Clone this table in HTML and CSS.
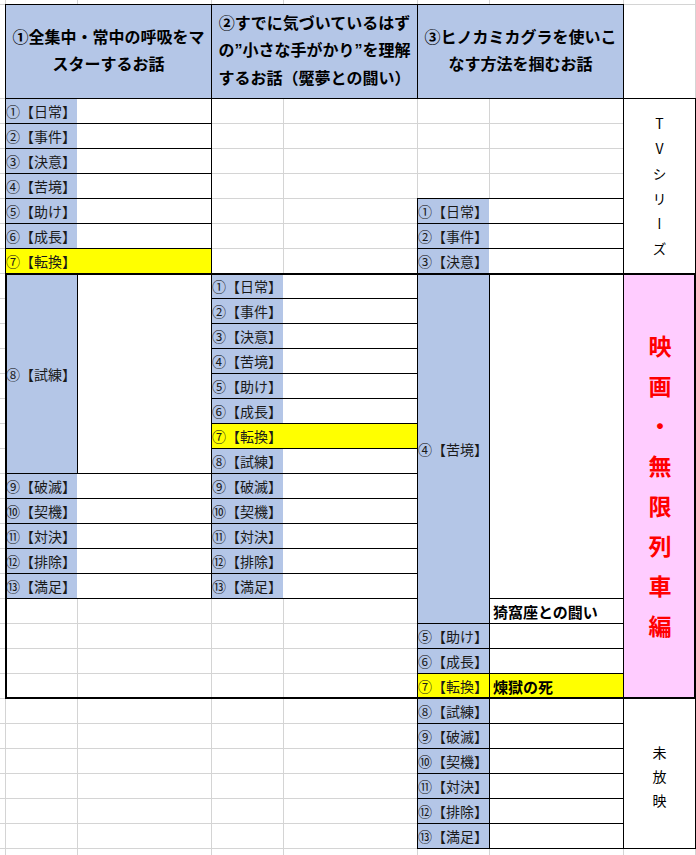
FILE: index.html
```html
<!DOCTYPE html>
<html lang="ja">
<head>
<meta charset="utf-8">
<title>鬼滅の刃 構成表</title>
<link rel="stylesheet" href="styles.css">
</head>
<body>
<div class="sheet">
  <!-- headers -->
  <div class="cell head ca hr"><p class="ht">①全集中・常中の呼吸をマ<br>スターするお話</p></div>
  <div class="cell head cb hr"><p class="ht">②すでに気づいているはず<br>の<span class="q">”</span>小さな手がかり<span class="q">”</span>を理解<br>するお話（魘夢との闘い）</p></div>
  <div class="cell head cc hr"><p class="ht">③ヒノカミカグラを使いこ<br>なす方法を掴むお話</p></div>

  <!-- column 1 -->
  <div class="cell ca r1"><span class="lb">①【日常】</span></div>
  <div class="cell ca r2"><span class="lb">②【事件】</span></div>
  <div class="cell ca r3"><span class="lb">③【決意】</span></div>
  <div class="cell ca r4"><span class="lb">④【苦境】</span></div>
  <div class="cell ca r5"><span class="lb">⑤【助け】</span></div>
  <div class="cell ca r6"><span class="lb">⑥【成長】</span></div>
  <div class="cell ca r7 yel"><span class="lb">⑦【転換】</span></div>
  <div class="cell cal r8 s8 blue lbx">⑧【試練】</div>
  <div class="cell cat r8 s8"></div>
  <div class="cell ca r16"><span class="lb">⑨【破滅】</span></div>
  <div class="cell ca r17"><span class="lb">⑩【契機】</span></div>
  <div class="cell ca r18"><span class="lb">⑪【対決】</span></div>
  <div class="cell ca r19"><span class="lb">⑫【排除】</span></div>
  <div class="cell ca r20"><span class="lb">⑬【満足】</span></div>

  <!-- column 2 -->
  <div class="cell cb r8"><span class="lb">①【日常】</span></div>
  <div class="cell cb r9"><span class="lb">②【事件】</span></div>
  <div class="cell cb r10"><span class="lb">③【決意】</span></div>
  <div class="cell cb r11"><span class="lb">④【苦境】</span></div>
  <div class="cell cb r12"><span class="lb">⑤【助け】</span></div>
  <div class="cell cb r13"><span class="lb">⑥【成長】</span></div>
  <div class="cell cb r14 yel"><span class="lb">⑦【転換】</span></div>
  <div class="cell cb r15"><span class="lb">⑧【試練】</span></div>
  <div class="cell cb r16"><span class="lb">⑨【破滅】</span></div>
  <div class="cell cb r17"><span class="lb">⑩【契機】</span></div>
  <div class="cell cb r18"><span class="lb">⑪【対決】</span></div>
  <div class="cell cb r19"><span class="lb">⑫【排除】</span></div>
  <div class="cell cb r20"><span class="lb">⑬【満足】</span></div>

  <!-- column 3 -->
  <div class="cell cc r5"><span class="lb">①【日常】</span></div>
  <div class="cell cc r6"><span class="lb">②【事件】</span></div>
  <div class="cell cc r7"><span class="lb">③【決意】</span></div>
  <div class="cell ccl r8 s14 blue lbx">④【苦境】</div>
  <div class="cell cct r8 s13"></div>
  <div class="cell cct r21"><span class="bt">猗窩座との闘い</span></div>
  <div class="cell ccl r22 blue lbx">⑤【助け】</div>
  <div class="cell cct r22"></div>
  <div class="cell ccl r23 blue lbx">⑥【成長】</div>
  <div class="cell cct r23"></div>
  <div class="cell ccl r24 yel lbx">⑦【転換】</div>
  <div class="cell cct r24 yel"><span class="bt">煉獄の死</span></div>
  <div class="cell ccl r25 blue lbx">⑧【試練】</div>
  <div class="cell cct r25"></div>
  <div class="cell ccl r26 blue lbx">⑨【破滅】</div>
  <div class="cell cct r26"></div>
  <div class="cell ccl r27 blue lbx">⑩【契機】</div>
  <div class="cell cct r27"></div>
  <div class="cell ccl r28 blue lbx">⑪【対決】</div>
  <div class="cell cct r28"></div>
  <div class="cell ccl r29 blue lbx">⑫【排除】</div>
  <div class="cell cct r29"></div>
  <div class="cell ccl r30 blue lbx">⑬【満足】</div>
  <div class="cell cct r30"></div>

  <!-- column 4 -->
  <div class="cell cd r1 s7 mid"><span class="vt tv">TVシリーズ</span></div>
  <div class="cell cd r8 s17 mid pink"><span class="vt movie">映画・無限列車編</span></div>
  <div class="cell cd r25 s6 mid"><span class="vt unaired">未放映</span></div>

  <!-- thick frame around the film block -->
  <div class="frame r8 s17"></div>
</div>
</body>
</html>
```

FILE: styles.css
```css
* { box-sizing: border-box; }

html, body {
  margin: 0;
  padding: 0;
  background: #fff;
}

body {
  font-family: "Noto Sans CJK JP", "Noto Sans", sans-serif;
  color: #000;
}

.sheet {
  display: grid;
  grid-template-columns: 5px 72px 134px 72px 134px 72px 134px 72px 1px;
  grid-template-rows: 4px 94px repeat(30, 25px) 7px;
  width: 696px;
  height: 855px;
  overflow: hidden;
  background:
    linear-gradient(to right,
      transparent 5px, #d4d4d4 5px 6px,
      transparent 6px 77px, #d4d4d4 77px 78px,
      transparent 78px 211px, #d4d4d4 211px 212px,
      transparent 212px 283px, #d4d4d4 283px 284px,
      transparent 284px 417px, #d4d4d4 417px 418px,
      transparent 418px 489px, #d4d4d4 489px 490px,
      transparent 490px 623px, #d4d4d4 623px 624px,
      transparent 624px 695px, #d4d4d4 695px 696px),
    repeating-linear-gradient(to bottom, #d4d4d4 0 1px, transparent 1px 25px) 0 98px / 100% 757px no-repeat,
    linear-gradient(#d4d4d4, #d4d4d4) 0 4px / 100% 1px no-repeat,
    #fff;
}

/* columns */
.ca  { grid-column: 2 / 4; }
.cal { grid-column: 2 / 3; }
.cat { grid-column: 3 / 4; }
.cb  { grid-column: 4 / 6; }
.cc  { grid-column: 6 / 8; }
.ccl { grid-column: 6 / 7; }
.cct { grid-column: 7 / 8; }
.cd  { grid-column: 8 / 9; }
.frame { grid-column: 2 / 9; }

/* rows */
.hr  { grid-row: 2 / 3; }
.r1  { grid-row-start: 3; }
.r2  { grid-row-start: 4; }
.r3  { grid-row-start: 5; }
.r4  { grid-row-start: 6; }
.r5  { grid-row-start: 7; }
.r6  { grid-row-start: 8; }
.r7  { grid-row-start: 9; }
.r8  { grid-row-start: 10; }
.r9  { grid-row-start: 11; }
.r10 { grid-row-start: 12; }
.r11 { grid-row-start: 13; }
.r12 { grid-row-start: 14; }
.r13 { grid-row-start: 15; }
.r14 { grid-row-start: 16; }
.r15 { grid-row-start: 17; }
.r16 { grid-row-start: 18; }
.r17 { grid-row-start: 19; }
.r18 { grid-row-start: 20; }
.r19 { grid-row-start: 21; }
.r20 { grid-row-start: 22; }
.r21 { grid-row-start: 23; }
.r22 { grid-row-start: 24; }
.r23 { grid-row-start: 25; }
.r24 { grid-row-start: 26; }
.r25 { grid-row-start: 27; }
.r26 { grid-row-start: 28; }
.r27 { grid-row-start: 29; }
.r28 { grid-row-start: 30; }
.r29 { grid-row-start: 31; }
.r30 { grid-row-start: 32; }

.s6  { grid-row-end: span 6; }
.s7  { grid-row-end: span 7; }
.s8  { grid-row-end: span 8; }
.s13 { grid-row-end: span 13; }
.s14 { grid-row-end: span 14; }
.s17 { grid-row-end: span 17; }

/* cells: border drawn on the gridline pixel via outline */
.cell {
  margin: 1px 0 0 1px;
  outline: 1px solid #000;
  background: #fff;
  display: flex;
  align-items: center;
  min-width: 0;
  min-height: 0;
}

.head {
  background: #b4c6e7;
  justify-content: center;
  padding-bottom: 3px;
}

.ht {
  margin: 0;
  text-align: center;
  font-weight: bold;
  font-size: 16px;
  line-height: 27px;
  white-space: nowrap;
}

.q {
  font-family: "Liberation Sans", sans-serif;
}

.lb {
  width: 71px;
  align-self: stretch;
  display: flex;
  align-items: center;
  background: #b4c6e7;
  font-size: 14px;
  color: #1a1a1a;
  white-space: nowrap;
}

.lbx {
  font-size: 14px;
  color: #1a1a1a;
  white-space: nowrap;
}

.blue { background: #b4c6e7; }
.yel, .yel .lb { background: #ffff00; }
.pink { background: #ffccff; }

.bt {
  font-size: 15px;
  font-weight: bold;
  padding-left: 3px;
  white-space: nowrap;
}

.mid { justify-content: center; }

.vt {
  writing-mode: vertical-rl;
  text-orientation: upright;
  line-height: 1;
}

.tv {
  font-size: 14px;
  letter-spacing: 11px;
  padding-top: 11px;
}

.movie {
  font-size: 23px;
  font-weight: bold;
  color: #ff0000;
  letter-spacing: 17px;
  padding-top: 17px;
}

.unaired {
  font-size: 14px;
  letter-spacing: 10px;
  padding-top: 16px;
}

.frame {
  margin: 1px 0 0 1px;
  outline: 2px solid #000;
  outline-offset: -1px;
  background: transparent;
}
```
